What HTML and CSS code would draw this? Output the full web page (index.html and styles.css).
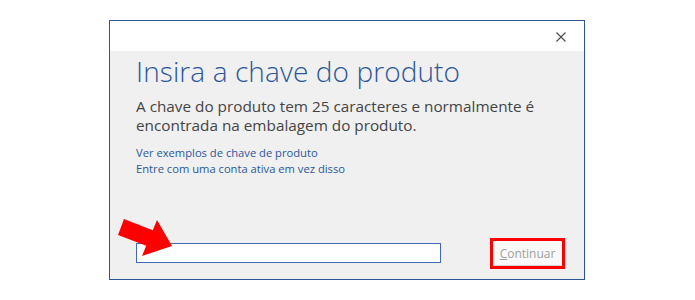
FILE: index.html
```html
<!DOCTYPE html>
<html lang="pt-BR">
<head>
    <meta charset="UTF-8">
    <meta name="viewport" content="width=device-width, initial-scale=1.0">
    <title>Insira a chave do produto</title>
    <link rel="stylesheet" href="styles.css">
</head>
<body>
    <div class="window">
        <div class="titlebar">
            <button class="close" aria-label="Fechar">
                <svg width="10" height="10" viewBox="0 0 10 10">
                    <path d="M0.5 0.5 L9.5 9.5 M9.5 0.5 L0.5 9.5" stroke="#4a4a4a" stroke-width="1.1" fill="none"/>
                </svg>
            </button>
        </div>
        <div class="content">
            <h1 class="title">Insira a chave do produto</h1>
            <p class="desc">A chave do produto tem 25 caracteres e normalmente é encontrada na embalagem do produto.</p>
            <div class="links">
                <a href="#">Ver exemplos de chave de produto</a>
                <a href="#">Entre com uma conta ativa em vez disso</a>
            </div>
            <div class="footer">
                <input class="key" type="text">
                <div class="highlight">
                    <button class="continue" disabled><u>C</u>ontinuar</button>
                </div>
            </div>
        </div>
    </div>

    <svg class="arrow" width="60" height="42" viewBox="116 217 60 42">
        <polygon points="124,219 152.8,230.2 157,220 172,246 142,256 146.2,245.8 118,235" fill="#ff0000"/>
    </svg>
</body>
</html>
```

FILE: styles.css
```css
body {
    margin: 0;
    background-color: #ffffff;
    font-family: "Open Sans", "Liberation Sans", sans-serif;
    position: relative;
}
.window {
    box-sizing: border-box;
    width: 476px;
    height: 260px;
    margin: 20px 0 0 109px;
    border: 1px solid #2b579a;
    background-color: #f0f0f0;
    display: flex;
    flex-direction: column;
}
.titlebar {
    height: 30px;
    background-color: #ffffff;
    display: flex;
    justify-content: flex-end;
    align-items: center;
}
.close {
    border: none;
    background: none;
    padding: 0;
    margin: 2px 18px 0 0;
    width: 10px;
    height: 10px;
    display: flex;
}
.content {
    flex: 1;
    display: flex;
    flex-direction: column;
    padding: 0 19px 10px 26px;
}
.title {
    margin: 2px 0 0 0;
    font-size: 28px;
    font-weight: 300;
    line-height: 36px;
    color: #2b579a;
    letter-spacing: 0.1px;
}
.desc {
    margin: 8px 0 0 0;
    font-size: 15.3px;
    line-height: 19px;
    color: #444444;
    width: 420px;
}
.links {
    margin-top: 10px;
    display: flex;
    flex-direction: column;
}
.links a {
    font-size: 11.2px;
    line-height: 16px;
    color: #2b579a;
    text-decoration: none;
}
.footer {
    margin-top: auto;
    display: flex;
    align-items: center;
    justify-content: space-between;
}
.key {
    box-sizing: border-box;
    width: 305px;
    height: 20px;
    margin: 0 0 2px 0;
    border: 1px solid #3c6ab4;
    background-color: #ffffff;
    outline: none;
}
.highlight {
    border: 3px solid #ff0000;
    display: flex;
}
.continue {
    width: 69px;
    height: 25px;
    border: none;
    border-bottom: 1px solid #d4d4d4;
    background-color: #f9f9f9;
    color: #a0a0a0;
    font-family: "Open Sans", "Liberation Sans", sans-serif;
    font-size: 12px;
    padding: 0;
}
.continue u {
    text-decoration-thickness: 1px;
}
.arrow {
    position: absolute;
    left: 116px;
    top: 217px;
}
```
